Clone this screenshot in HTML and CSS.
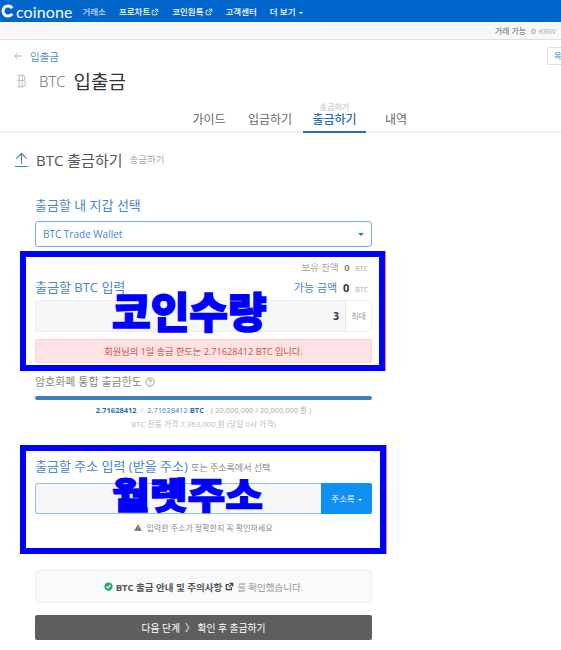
FILE: index.html
```html
<!DOCTYPE html>
<html lang="ko">
<head>
  <meta charset="UTF-8" />
  <title>BTC 입출금</title>
  <link rel="stylesheet" href="styles.css">
</head>

<body>
  <div class="top-nav">
    <div class="logo">
      <svg class="logo-ring" viewBox="0 0 14 14"><path d="M11.200 4.300A5 5 0 1 0 11.200 9.700" fill="none" stroke="#fff" stroke-width="3"/></svg>
      <span class="logo-text">coinone</span>
    </div>
    <a class="nav-item first">거래소</a>
    <a class="nav-item">프로차트<svg class="ext" viewBox="0 0 10 10"><path d="M7 5.500V8.500H1.500V3H4.500M5 1.500H8.500V5M8.500 1.500L4.500 5.500" fill="none" stroke="currentColor" stroke-width="1"/></svg></a>
    <a class="nav-item">코인원톡<svg class="ext" viewBox="0 0 10 10"><path d="M7 5.500V8.500H1.500V3H4.500M5 1.500H8.500V5M8.500 1.500L4.500 5.500" fill="none" stroke="currentColor" stroke-width="1"/></svg></a>
    <a class="nav-item">고객센터</a>
    <a class="nav-item">더 보기 <span class="caret-small"></span></a>
  </div>

  <div class="sub-bar">
    <span>거래 가능</span>
    <span class="zero">0</span>
    <span class="krw">KRW</span>
  </div>

  <div class="page-head">
    <div class="back-row">
      <svg class="back-arrow" viewBox="0 0 12 10"><path d="M5 1L1 5L5 9M1 5H11" fill="none" stroke="#8fa3b8" stroke-width="1"/></svg>
      <a class="back-link">입출금</a>
      <span class="side-btn">목</span>
    </div>
    <div class="page-title">
      <svg class="btc-icon" viewBox="0 0 14 20"><path d="M4 1V19M8 1V19M2 3H9C12 3 12 9.500 9 9.500H2M9 9.500C13 9.500 13 17 9 17H2" fill="none" stroke="#c4c4c4" stroke-width="1.300"/></svg>
      <span class="coin">BTC</span>
      <span class="title-ko">입출금</span>
    </div>
  </div>

  <div class="tabs">
    <a class="tab">가이드</a>
    <a class="tab">입금하기</a>
    <a class="tab active"><small>송금하기</small>출금하기</a>
    <a class="tab">내역</a>
  </div>

  <div class="content">
    <h2 class="section-title">
      <svg class="up-icon" viewBox="0 0 16 17"><path d="M8 13V2M2.500 7.500L8 2L13.500 7.500M1 16H15" fill="none" stroke="#3b7fc4" stroke-width="1.200"/></svg>
      <span>BTC 출금하기</span> <small>송금하기</small>
    </h2>

    <div class="form">
      <p class="label wallet-label">출금할 내 지갑 선택</p>
      <div class="select">
        <span>BTC Trade Wallet</span>
        <span class="caret"></span>
      </div>

      <div class="mark-box amount-box">
        <div class="balance-row">보유 잔액 <b>0</b> <span>BTC</span></div>
        <div class="label-row">
          <p class="label">출금할 BTC 입력</p>
          <div class="avail">가능 금액 <b>0</b> <span>BTC</span></div>
        </div>
        <div class="amount-input">
          <span class="amount-value">3</span>
          <span class="amount-max">최대</span>
        </div>
        <div class="alert">회원님의 1일 송금 한도는 2.71628412 BTC 입니다.</div>
        <div class="mark-text">코인수량</div>
      </div>

      <p class="label gray limit-label">암호화폐 통합 출금한도 <svg class="help" viewBox="0 0 12 12"><circle cx="6" cy="6" r="5" fill="none" stroke="#888"/><path d="M4.300 4.800C4.300 2.800 7.800 2.800 7.800 4.800C7.800 6 6 6 6 7.500M6 8.500V9.500" fill="none" stroke="#888"/></svg></p>
      <div class="progress"></div>
      <p class="limit-nums"><b>2.71628412</b> <i>/</i> <em>2.71628412</em> <b>BTC</b> <span>( 20,000,000 / 20,000,000 원 )</span></p>
      <p class="limit-note">BTC 전풍 가격 7,363,000 원 (당일 0시 가격)</p>

      <div class="mark-box address-box">
        <p class="label">출금할 주소 입력 (받을 주소) <small>또는 주소록에서 선택</small></p>
        <div class="address-input">
          <span class="address-field"></span>
          <span class="address-btn">주소록 <span class="caret-small"></span></span>
        </div>
        <p class="address-warn"><svg class="warn-icon" viewBox="0 0 12 11"><path d="M6 0.500L11.800 10.500H0.200Z" fill="#666"/><path d="M6 4V7.500M6 8.300V9.500" stroke="#fff"/></svg> 입력한 주소가 정확한지 꼭 확인하세요</p>
        <div class="mark-text">월렛주소</div>
      </div>

      <div class="notice">
        <svg class="check" viewBox="0 0 12 12"><circle cx="6" cy="6" r="5.500" fill="#27a76b"/><path d="M3.300 6L5.300 8L8.700 4.300" fill="none" stroke="#fff" stroke-width="1.500"/></svg>
        <b>BTC 출금 안내 및 주의사항</b>
        <svg class="ext-dark" viewBox="0 0 10 10"><path d="M7 5.500V8.500H1.500V3H4.500M5 1.500H8.500V5M8.500 1.500L4.500 5.500" fill="none" stroke="#444" stroke-width="1.400"/></svg>
        <span>를 확인했습니다.</span>
      </div>

      <button class="next-btn">다음 단계 &nbsp;〉 확인 후 출금하기</button>
    </div>
  </div>
</body>
</html>
```

FILE: styles.css
```css
* {
  box-sizing: border-box;
}
html, body {
  height: 650px;
  overflow: hidden;
}
body {
  margin: 0;
  background: #fff;
  color: #444;
  font-family: "Open Sans", "Noto Sans CJK KR", sans-serif;
  font-size: 12px;
}
p, h2 {
  margin: 0;
  font-weight: normal;
}

/* top navigation */
.top-nav {
  display: flex;
  align-items: center;
  height: 22px;
  background: #0066cc;
  color: #fff;
}
.logo {
  display: flex;
  align-items: center;
  margin-left: 1px;
}
.logo-ring {
  width: 14px;
  height: 14px;
}
.logo-text {
  margin-left: 1px;
  font-family: "Lato", sans-serif;
  font-size: 16px;
  letter-spacing: 0.1px;
}
.nav-item {
  margin-left: 13px;
  font-size: 8.500px;
  font-weight: 500;
  white-space: nowrap;
}
.nav-item.first {
  margin-left: 10px;
  opacity: 0.75;
}
.ext {
  width: 8px;
  height: 8px;
  margin-left: 1px;
  vertical-align: -1px;
}
.caret-small {
  display: inline-block;
  vertical-align: middle;
  margin-left: 1px;
  border: 2.500px solid transparent;
  border-top-color: currentColor;
  border-bottom: 0;
}

.sub-bar {
  display: flex;
  justify-content: flex-end;
  align-items: center;
  gap: 3px;
  height: 18px;
  padding-right: 5px;
  background: #f8f8f8;
  border-bottom: 1px solid #e0e0e0;
  font-size: 8px;
  color: #666;
}
.sub-bar .zero {
  color: #e2574c;
  margin-left: 2px;
}
.sub-bar .krw {
  color: #aaa;
}

/* page heading */
.page-head {
  padding: 0 0 0 14px;
}
.back-row {
  display: flex;
  align-items: center;
  height: 32px;
}
.back-arrow {
  width: 9px;
  height: 8px;
}
.back-link {
  margin-left: 7px;
  font-size: 10.500px;
  color: #5d8fc2;
}
.side-btn {
  margin-left: auto;
  width: 24px;
  height: 18px;
  margin-right: -10px;
  border: 1px solid #ddd;
  border-radius: 2px;
  font-size: 8px;
  line-height: 16px;
  padding-left: 6px;
  color: #3b86d6;
}
.page-title {
  display: flex;
  align-items: center;
  height: 22px;
  margin-top: -2px;
}
.btc-icon {
  width: 11px;
  height: 16px;
  margin-left: 2px;
}
.coin {
  margin-left: 12px;
  font-size: 15px;
  color: #666;
  font-weight: 300;
}
.title-ko {
  margin-left: 8px;
  font-size: 19px;
  color: #333;
}

.tabs {
  display: flex;
  margin-top: 11px;
  padding-left: 179px;
  height: 30px;
  border-bottom: 2px solid #f0f0f0;
}
.tab {
  position: relative;
  width: 60px;
  padding-top: 7px;
  font-size: 12px;
  color: #666;
  text-align: center;
}
.tab:nth-child(2) {
  width: 62px;
}
.tab:nth-child(3) {
  width: 63px;
  margin-left: 2px;
}
.tab:nth-child(4) {
  width: 56px;
  margin-left: 2px;
}
.tab.active {
  height: 30px;
  color: #1f6fc0;
  font-weight: 500;
  border-bottom: 2px solid #1f6fc0;
}
.tab small {
  position: absolute;
  top: -2px;
  left: 0;
  right: 0;
  font-size: 8px;
  font-weight: normal;
  color: #bbb;
}

/* content */
.content {
  padding-left: 14px;
}
.section-title {
  display: flex;
  align-items: center;
  gap: 7px;
  height: 20px;
  margin-top: 16px;
  font-size: 15px;
  color: #555;
}
.section-title small {
  font-size: 9.500px;
  color: #aaa;
}
.up-icon {
  width: 15px;
  height: 17px;
}
.form {
  width: 358px;
  padding-left: 21px;
}
.label {
  font-size: 13px;
  color: #4a86c5;
}
.label small {
  font-size: 9px;
  color: #888;
}
.label.gray {
  color: #888;
  font-size: 11px;
}
.wallet-label {
  margin-top: 26px;
  height: 18px;
}
.select {
  display: flex;
  justify-content: space-between;
  align-items: center;
  width: 337px;
  height: 26px;
  margin-top: 8px;
  padding: 0 7px;
  border: 1px solid #6db2ee;
  border-radius: 3px;
  font-size: 10px;
  color: #3f86cf;
}
.caret {
  border: 3.500px solid transparent;
  border-top-color: #1b83d8;
  border-bottom: 0;
}

/* the blue marks drawn over the screenshot */
.mark-box {
  position: relative;
  width: 365px;
  margin-left: -15px;
  border: 6px solid #0000ff;
  padding: 0 7px 0 9px;
  box-shadow: 1px 0 0 rgba(255, 0, 0, 0.5);
}
.mark-text {
  position: absolute;
  left: 86px;
  font-size: 42px;
  line-height: 44px;
  font-weight: 900;
  color: #0000ff;
  -webkit-text-stroke: 1.500px #0000ff;
  white-space: nowrap;
}
.amount-box {
  height: 120px;
  margin-top: 4px;
}
.amount-box .mark-text {
  top: 33px;
}
.balance-row {
  margin-top: 4px;
  text-align: right;
  font-size: 9.500px;
  color: #aaa;
  padding-right: 4px;
  line-height: 13px;
}
.balance-row b {
  color: #888;
  margin: 0 3px;
}
.balance-row span {
  font-size: 7px;
}
.label-row {
  display: flex;
  justify-content: space-between;
  align-items: center;
  margin-top: 2px;
  padding-right: 4px;
}
.avail {
  font-size: 11px;
  color: #4a86c5;
}
.avail b {
  color: #333;
  margin: 0 3px;
}
.avail span {
  font-size: 7px;
  color: #aaa;
}
.amount-input {
  display: flex;
  align-items: center;
  height: 32px;
  margin-top: 4px;
  border: 1px solid #eee;
  border-radius: 3px;
  background: #f6f7f9;
}
.amount-value {
  flex: 1;
  text-align: right;
  padding-right: 6px;
  font-size: 10px;
  font-weight: 700;
  color: #333;
}
.amount-max {
  width: 26px;
  height: 30px;
  background: #fff;
  border-left: 1px solid #e6e6e6;
  line-height: 30px;
  text-align: center;
  font-size: 8px;
  color: #999;
}
.alert {
  height: 24px;
  margin-top: 7px;
  line-height: 24px;
  border: 1px solid #f5d5d5;
  border-radius: 2px;
  background: #fde3e3;
  text-align: center;
  font-size: 9.200px;
  color: #c9504a;
}

.limit-label {
  margin-top: 3px;
  height: 16px;
  line-height: 16px;
}
.help {
  width: 10px;
  height: 10px;
  vertical-align: -1px;
}
.progress {
  width: 337px;
  height: 4px;
  margin-top: 6px;
  border-radius: 2px;
  background: #3b7fc4;
}
.limit-nums {
  width: 337px;
  margin-top: 4px;
  text-align: center;
  font-size: 7.500px;
  color: #3b7fc4;
}
.limit-nums b {
  color: #2a6cb0;
}
.limit-nums em {
  font-style: normal;
}
.limit-nums i {
  font-style: normal;
  color: #ccc;
  margin: 0 2px;
}
.limit-nums span {
  margin-left: 5px;
  color: #aaa;
}
.limit-note {
  width: 337px;
  margin-top: 3px;
  text-align: center;
  font-size: 7.800px;
  color: #bbb;
}

.address-box {
  width: 366px;
  height: 109px;
  margin-top: 16px;
}
.address-box .label {
  margin-top: 5px;
}
.address-box .mark-text {
  top: 22px;
  font-size: 41px;
  transform: scaleY(0.88);
}
.address-input {
  display: flex;
  width: 337px;
  height: 31px;
  margin-top: 8px;
}
.address-field {
  flex: 1;
  background: #f6f7f9;
  border: 1px solid #8fc3ee;
  border-right: 0;
  border-radius: 3px 0 0 3px;
}
.address-btn {
  width: 51px;
  background: #1190f3;
  color: #fff;
  border-radius: 0 2px 2px 0;
  font-size: 8.500px;
  line-height: 31px;
  text-align: center;
}
.address-warn {
  width: 337px;
  margin-top: 8px;
  text-align: center;
  font-size: 8px;
  color: #888;
}
.warn-icon {
  width: 8px;
  height: 7px;
  margin-right: 2px;
}

.notice {
  display: flex;
  justify-content: center;
  align-items: center;
  gap: 3px;
  width: 337px;
  height: 33px;
  margin-top: 16px;
  background: #f8f9fa;
  border: 1px solid #eee;
  border-radius: 3px;
  font-size: 9.500px;
  color: #999;
}
.notice b {
  color: #555;
  font-weight: 700;
}
.check {
  width: 9px;
  height: 9px;
}
.ext-dark {
  width: 9px;
  height: 9px;
}
.next-btn {
  display: block;
  width: 337px;
  height: 25px;
  margin-top: 12px;
  border: none;
  border-radius: 2px;
  background: #5e5e5e;
  color: #fff;
  font-family: inherit;
  font-size: 9.800px;
}
```
